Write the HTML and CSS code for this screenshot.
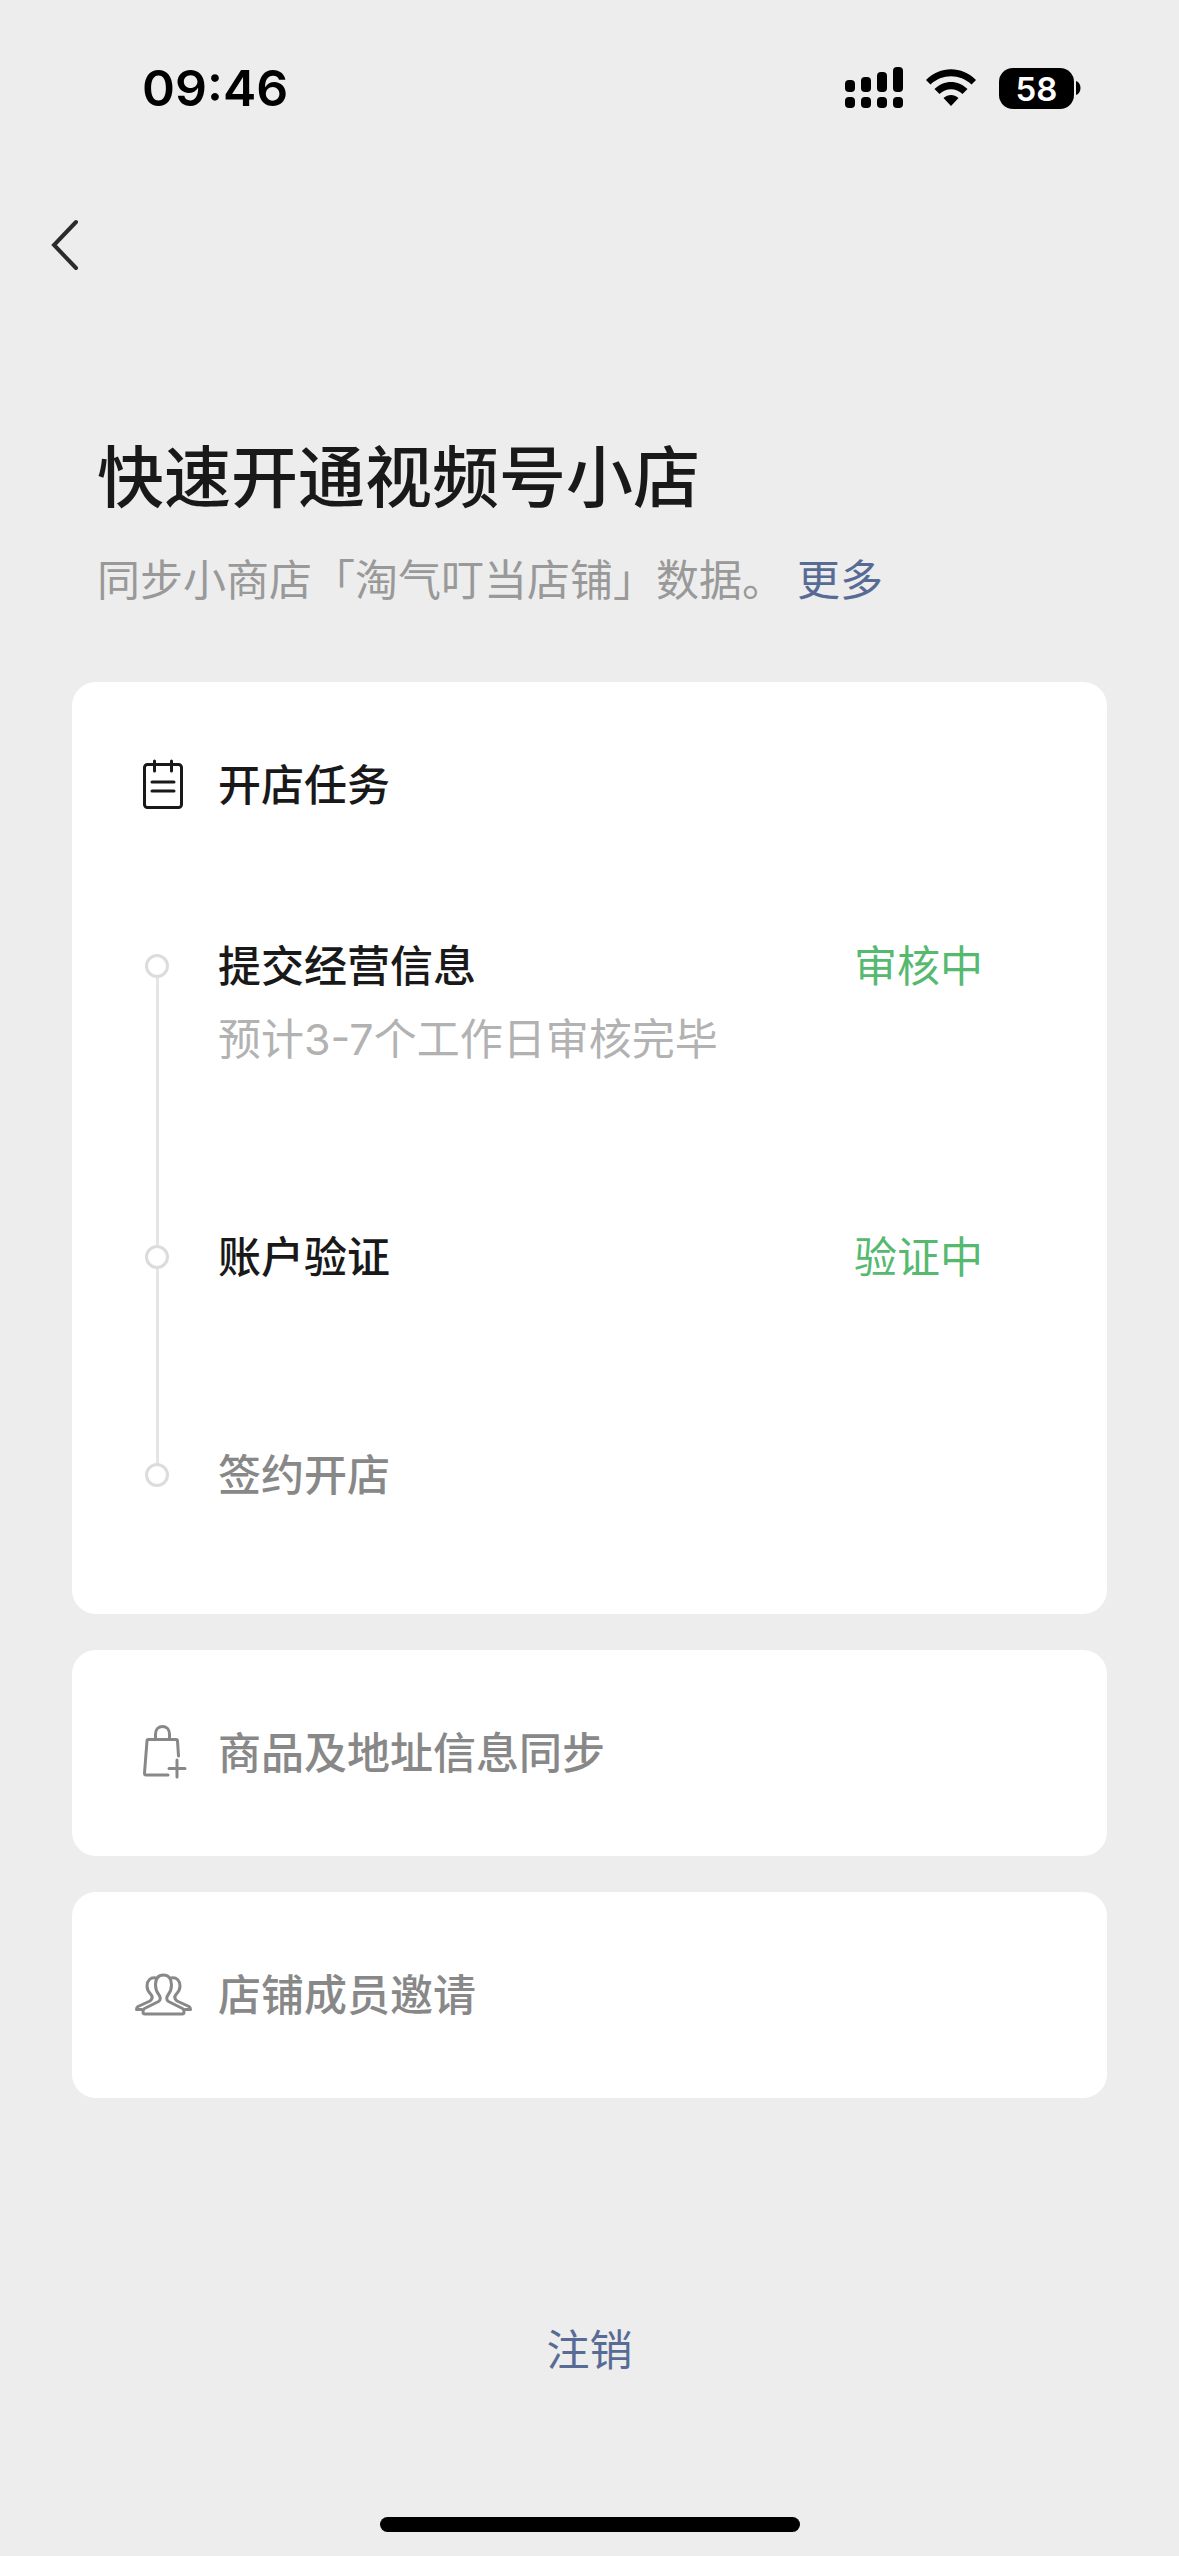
FILE: index.html
```html
<!DOCTYPE html>
<html lang="zh-CN">
<head>
    <meta charset="UTF-8">
    <meta name="viewport" content="width=device-width, initial-scale=1.0">
    <title>快速开通视频号小店</title>
    <link rel="stylesheet" href="styles.css">
</head>
<body>
    <div class="status-bar">
        <div class="time">09:46</div>
        <div class="status-icons">
            <svg class="signal" width="58" height="42" viewBox="0 0 58 42">
                <rect x="0" y="13" width="10" height="12" rx="4"/>
                <rect x="16" y="10" width="10" height="15" rx="4"/>
                <rect x="32" y="5" width="10" height="20" rx="4"/>
                <rect x="48" y="0" width="10" height="25" rx="4"/>
                <rect x="0" y="30" width="10" height="11" rx="4"/>
                <rect x="16" y="30" width="10" height="11" rx="4"/>
                <rect x="32" y="30" width="10" height="11" rx="4"/>
                <rect x="48" y="30" width="10" height="11" rx="4"/>
            </svg>
            <svg class="wifi" width="50" height="38" viewBox="0 0 50 38">
                <path d="M0 11 C14 -3.5 36 -3.5 50 11 L45.5 15.5 C34 4.5 16 4.5 4.5 15.5 Z"/>
                <path d="M8.5 20 C18 10.5 32 10.5 41.5 20 L36.5 25 C30 18.5 20 18.5 13.5 25 Z"/>
                <path d="M17.5 29 C22 25 28 25 32.5 29 L25 37 Z"/>
            </svg>
            <div class="battery">
                <span class="battery-level">58</span>
                <svg width="5" height="14" viewBox="0 0 5 14"><path d="M0 0 C6 2 6 12 0 14 Z"/></svg>
            </div>
        </div>
    </div>

    <nav class="nav">
        <button class="back" type="button" aria-label="返回">
            <svg width="30" height="54" viewBox="0 0 30 54">
                <path d="M26 4 L4 27 L26 50"/>
            </svg>
        </button>
    </nav>

    <main class="content">
        <header class="intro">
            <h1>快速开通视频号小店</h1>
            <p>同步小商店「淘气叮当店铺」数据。<a class="link more" href="#">更多</a></p>
        </header>

        <section class="card tasks">
            <h2 class="card-title">
                <svg class="icon" width="58" height="58" viewBox="0 0 58 58">
                    <rect x="10.5" y="8.5" width="37" height="43" rx="3"/>
                    <path d="M20.5 5v10M37.5 5v10M18 26h22M18 35h22"/>
                </svg>
                开店任务
            </h2>
            <ol class="steps">
                <li class="step">
                    <div class="marker"></div>
                    <div class="step-text">
                        <h3>提交经营信息</h3>
                        <p>预计3-7个工作日审核完毕</p>
                    </div>
                    <span class="state">审核中</span>
                </li>
                <li class="step">
                    <div class="marker"></div>
                    <div class="step-text">
                        <h3>账户验证</h3>
                    </div>
                    <span class="state">验证中</span>
                </li>
                <li class="step pending">
                    <div class="marker"></div>
                    <div class="step-text">
                        <h3>签约开店</h3>
                    </div>
                </li>
            </ol>
        </section>

        <section class="card single">
            <h2 class="card-title">
                <svg class="icon" width="58" height="58" viewBox="0 0 58 58">
                    <path d="M44.5 32 L43.5 17 Q43.5 15.5 42 15.5 H14.5 Q13 15.5 13 17 L10.5 49 Q10.5 51 12 51 H34"/>
                    <path d="M21.5 15 V10 C21.5 0 35.5 0 35.5 10 V15M43 36v17M35 44.5h16"/>
                </svg>
                商品及地址信息同步
            </h2>
        </section>

        <section class="card single">
            <h2 class="card-title">
                <svg class="icon" width="58" height="58" viewBox="0 0 58 58">
                    <path d="M29.5 9 C24 9 21.5 13 21.5 19 C21.5 24 23 26.500 25 29 C26.5 31 27 34 24.5 35.5 L10.5 42.5 Q9 43.5 9 46 Q9 48 11 48 H48 Q50 48 50 46 Q50 43.5 48.5 42.5 L34.5 35.5 C32 34 32.5 31 34 29 C36 26.5 37.5 24 37.5 19 C37.5 13 34.5 9 29.5 9 Z"/>
                    <path d="M22 12 C16 11 13 15 13 20 C13 24 15 26.5 17 28.5 C19 31 18.5 33 16 35 L4 40.5 Q2.5 41.5 2.5 43.5 H8"/>
                    <path d="M37 12 C43 11 46 15 46 20 C46 24 44 26.5 42 28.5 C40 31 40.5 33 43 35 L55 40.5 Q56.5 41.5 56.5 43.5 H51"/>
                </svg>
                店铺成员邀请
            </h2>
        </section>

        <button class="link logout" type="button">注销</button>
    </main>

    <div class="home-indicator"></div>
</body>
</html>
```
FILE: styles.css
```css
* {
    box-sizing: border-box;
    margin: 0;
    padding: 0;
}
body {
    display: flex;
    flex-direction: column;
    min-height: 100vh;
    background-color: #ededed;
    color: #191919;
    font-family: Inter, "Noto Sans CJK SC", sans-serif;
    font-size: 43px;
    line-height: 60px;
}
svg {
    display: block;
    flex: none;
}
button {
    border: none;
    background: none;
    font: inherit;
    cursor: pointer;
}
.link {
    color: #576b95;
    text-decoration: none;
}

/* status bar */
.status-bar {
    display: flex;
    justify-content: space-between;
    align-items: center;
    height: 176px;
    padding: 0 98px 0 142px;
    color: #000;
}
.time {
    font-size: 50px;
    font-weight: 600;
}
.status-icons {
    display: flex;
    align-items: center;
    gap: 23px;
}
.battery {
    display: flex;
    align-items: center;
    gap: 2px;
}
.battery-level {
    width: 75px;
    height: 41px;
    border-radius: 14px;
    background-color: #000;
    color: #fff;
    font-size: 33px;
    font-weight: 600;
    line-height: 42px;
    text-align: center;
}

/* navigation */
.nav {
    display: flex;
    align-items: center;
    height: 138px;
    padding-left: 26px;
}
.back {
    padding: 24px;
}
.back path {
    fill: none;
    stroke: #2b2b2b;
    stroke-width: 4;
    stroke-linecap: round;
}

.content {
    display: flex;
    flex-direction: column;
    gap: 36px;
    padding: 116px 72px 0;
}
.intro {
    padding: 0 25px 36px;
}
.intro h1 {
    margin-bottom: 24px;
    font-size: 67px;
    font-weight: 500;
    line-height: 96px;
}
.intro p {
    color: #999;
}
.more {
    margin-left: 12px;
}

/* cards */
.card {
    border-radius: 24px;
    background-color: #fff;
}
.card-title {
    display: flex;
    align-items: center;
    gap: 26px;
    padding-left: 62px;
    font-size: 43px;
    font-weight: 500;
}
.icon {
    fill: none;
    stroke: currentColor;
    stroke-width: 3;
    stroke-linecap: round;
    stroke-linejoin: round;
}
.tasks {
    padding: 73px 0 109px;
}
.single {
    padding: 73px 0;
    color: #888;
}

/* task steps */
.steps {
    padding: 121px 124px 0 73px;
    list-style: none;
}
.step {
    position: relative;
    display: flex;
    gap: 49px;
    padding-bottom: 158px;
}
.step:last-child {
    padding-bottom: 0;
}
.marker {
    flex: none;
    width: 24px;
    height: 24px;
    margin-top: 18px;
    border: 3px solid #dcdcdc;
    border-radius: 50%;
}
/* line from this dot down to the next one */
.step:not(:last-child)::before {
    content: "";
    position: absolute;
    top: 42px;
    bottom: -18px;
    left: 11px;
    width: 3px;
    background-color: #e5e5e5;
}
.step-text {
    flex: 1;
}
.step h3 {
    font-size: 43px;
    font-weight: 500;
}
.step p {
    margin-top: 13px;
    color: #b2b2b2;
}
.state {
    color: #56b970;
}
.pending {
    color: #888;
}

.logout {
    align-self: center;
    margin-top: 186px;
}
.home-indicator {
    align-self: center;
    width: 420px;
    height: 15px;
    margin: auto 0 24px;
    border-radius: 8px;
    background-color: #000;
}
```
